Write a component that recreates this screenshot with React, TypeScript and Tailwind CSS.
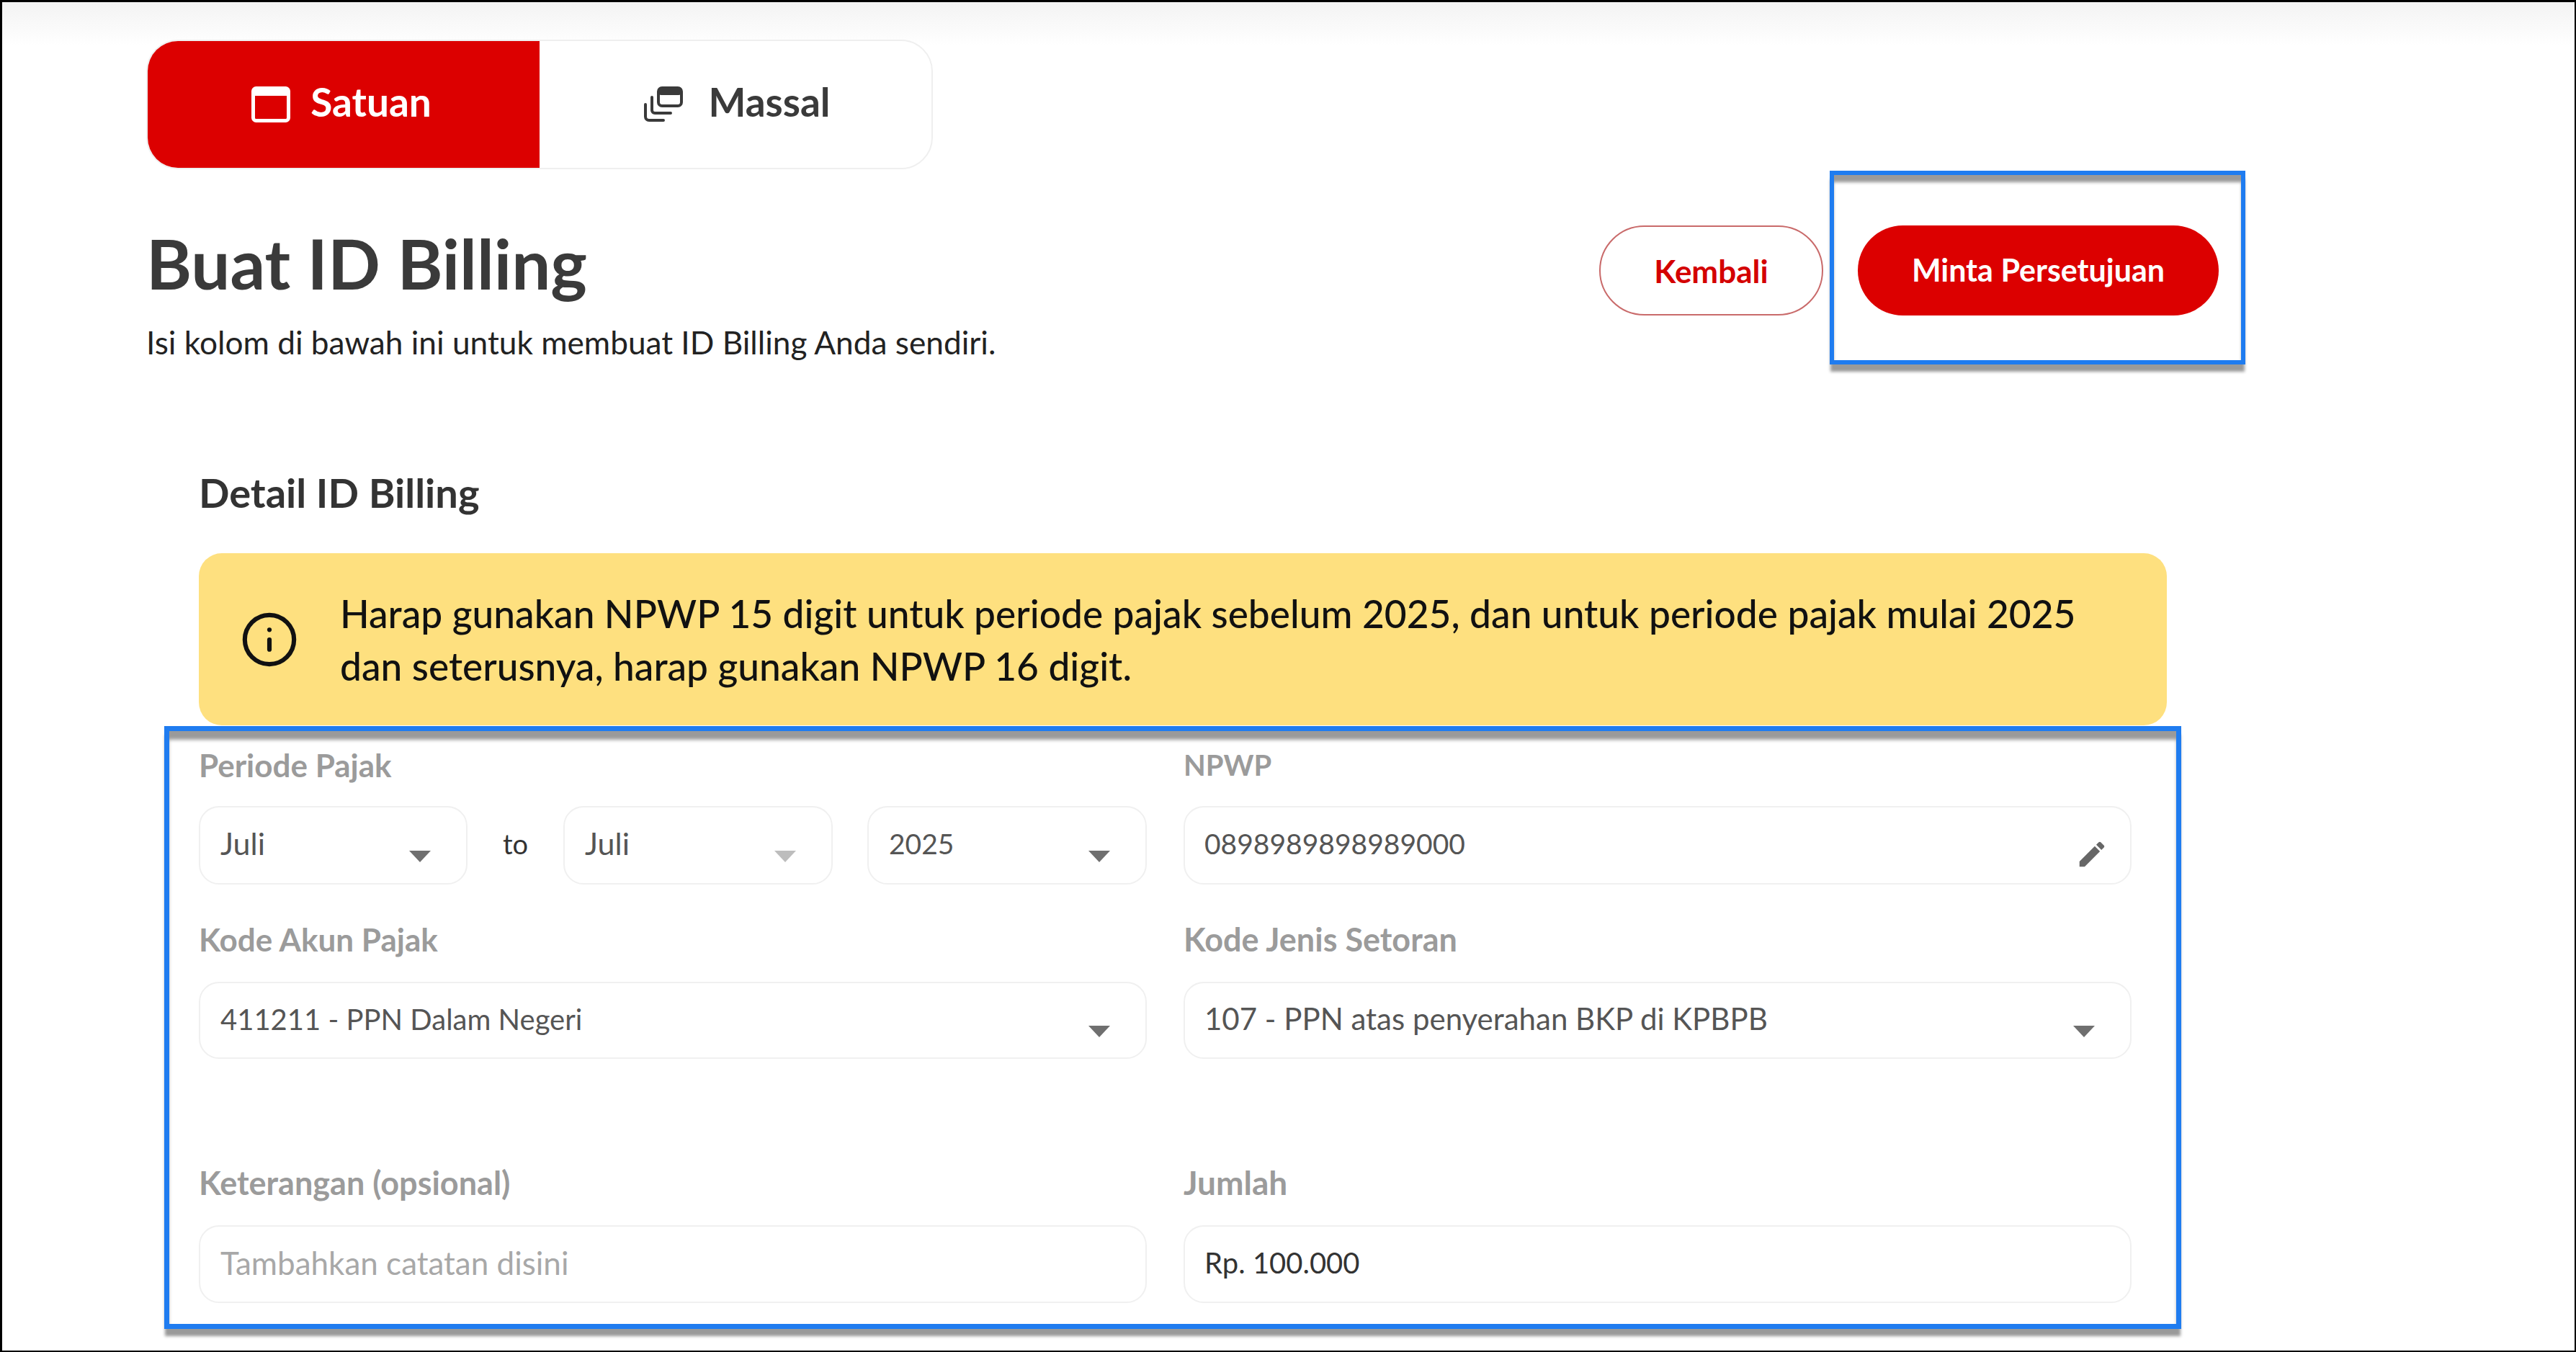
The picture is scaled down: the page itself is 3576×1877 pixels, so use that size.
import { Info } from "lucide-react";

function SingleIcon() {
  return (
    <svg width="54" height="50" viewBox="0 0 54 50" fill="none">
      <rect x="2.5" y="2.5" width="49" height="45" rx="4" stroke="#fff" strokeWidth="5" />
      <rect x="2" y="2" width="50" height="11" rx="3" fill="#fff" />
    </svg>
  );
}

function BulkIcon() {
  return (
    <svg width="54" height="50" viewBox="0 0 54 50" fill="none">
      <rect x="20" y="2" width="32" height="25" rx="5" stroke="#3a3a3a" strokeWidth="4" />
      <rect x="20" y="1" width="32" height="11" rx="4" fill="#3a3a3a" />
      <path d="M11 15v18a4 4 0 0 0 4 4h22" stroke="#3a3a3a" strokeWidth="4" strokeLinecap="round" />
      <path d="M2 25v17a5 5 0 0 0 5 5h20" stroke="#3a3a3a" strokeWidth="4" strokeLinecap="round" />
    </svg>
  );
}

function Arrow({ light }: { light?: boolean }) {
  return (
    <svg width="30" height="16" viewBox="0 0 30 16" className="mt-[30px] shrink-0">
      <path d="M0 0h30L15 16z" fill={light ? "#bdbdbd" : "#6f6f6f"} />
    </svg>
  );
}

function SelectBox({ value, light, className, size }: { value: string; light?: boolean; className: string; size: string }) {
  return (
    <div className={`flex h-full items-center justify-between rounded-[28px] border-2 border-[#f0f0f0] bg-white pl-[28px] pr-[49px] ${className}`}>
      <span className={`-mt-[4px] text-[#555555] ${size}`}>{value}</span>
      <Arrow light={light} />
    </div>
  );
}

function Label({ children, size = "text-[44px]" }: { children: string; size?: string }) {
  return <div className={`h-[50px] leading-[46px] font-bold text-[#9b9b9b] ${size}`}>{children}</div>;
}

function App() {
  return (
    <div className="box-border h-[1877px] overflow-hidden border-[3px] border-b-2 border-r-2 border-black bg-[linear-gradient(#f3f3f3,#ffffff_60px)] pl-[200px] pt-[52px] font-['Lato',sans-serif]">
      <div className="flex h-[180px] w-[1092px] overflow-hidden rounded-[44px] border-2 border-[#efefef] bg-white">
        <div className="-my-[2px] -ml-[2px] flex w-[546px] items-center justify-center gap-[28px] bg-[#dc0000] pr-[4px]">
          <SingleIcon />
          <span className="-mt-[8px] text-[55px] font-bold text-white">Satuan</span>
        </div>
        <div className="flex flex-1 items-center justify-center gap-[35px] pl-[5px]">
          <BulkIcon />
          <span className="-mt-[8px] text-[55px] font-bold text-[#3a3a3a]">Massal</span>
        </div>
      </div>

      <div className="mt-[2px] flex w-[2914px] items-start justify-between">
        <div className="mt-[73px]">
          <h1 className="text-[96px] leading-[110px] font-bold text-[#3a3a3a]">Buat ID Billing</h1>
          <p className="mt-[30px] text-[44.2px] leading-[50px] text-[#222222]">Isi kolom di bawah ini untuk membuat ID Billing Anda sendiri.</p>
        </div>
        <div className="flex items-start gap-[9px]">
          <button className="mt-[76px] h-[125px] w-[311px] rounded-full border-2 border-[#c96a6a] bg-white text-[44px] font-bold text-[#d40000]">Kembali</button>
          <div className="border-[6px] border-[#1f7cf0] pl-[33px] pr-[31px] pt-[70px] pb-[62px] shadow-[0_11px_4px_-1px_#9a9a9a,inset_0_11px_4px_-1px_#9a9a9a]">
            <button className="block h-[125px] w-[501px] rounded-full bg-[#dc0000] text-[43px] font-bold text-white">Minta Persetujuan</button>
          </div>
        </div>
      </div>

      <div className="ml-[73px] mt-[148px] text-[56px] leading-[60px] font-bold text-[#333333]">Detail ID Billing</div>

      <div className="ml-[73px] mt-[54px] flex h-[239px] w-[2732px] items-center rounded-[32px] bg-[#fee07f] pl-[57px]">
        <Info size={82} strokeWidth={1.8} color="#111111" className="shrink-0" />
        <p className="ml-[57px] text-[53.25px] leading-[73px] font-medium text-[#111111]">
          Harap gunakan NPWP 15 digit untuk periode pajak sebelum 2025, dan untuk periode pajak mulai 2025
          <br />
          dan seterusnya, harap gunakan NPWP 16 digit.
        </p>
      </div>

      <div className="ml-[25px] mt-[1px] box-border w-[2800px] border-[7px] border-[#1f7cf0] pl-[41px] pr-[62px] pt-[24px] pb-[29px] shadow-[0_11px_4px_-1px_#9a9a9a,inset_0_13px_5px_-1px_#9a9a9a]">
        <div className="grid grid-cols-[1316px_1316px] gap-x-[51px]">
          <div>
            <Label>Periode Pajak</Label>
            <div className="mt-[30px] flex h-[109px] items-center">
              <SelectBox value="Juli" size="text-[43px]" className="w-[373px]" />
              <span className="-mt-[4px] w-[133px] text-center text-[38px] text-[#333333]">to</span>
              <SelectBox value="Juli" size="text-[43px]" light className="w-[374px]" />
              <div className="w-[48px]" />
              <SelectBox value="2025" size="text-[39px]" className="w-[388px]" />
            </div>
          </div>
          <div>
            <Label size="text-[40px]">NPWP</Label>
            <div className="mt-[30px] flex h-[109px] items-center justify-between rounded-[28px] border-2 border-[#f0f0f0] pl-[27px] pr-[30px]">
              <span className="-mt-[4px] text-[39px] text-[#555555]">0898989898989000</span>
              <svg width="46" height="46" viewBox="0 0 24 24" className="mt-[24px]" fill="#666666">
                <path d="M3 17.25V21h3.75L17.81 9.94l-3.75-3.75L3 17.25zM20.71 7.04c.39-.39.39-1.02 0-1.41l-2.34-2.34c-.39-.39-1.02-.39-1.41 0l-1.83 1.83 3.75 3.75 1.83-1.83z" />
              </svg>
            </div>
          </div>

          <div className="mt-[53px]">
            <Label>Kode Akun Pajak</Label>
            <div className="mt-[32px] h-[107px]">
              <SelectBox value="411211 - PPN Dalam Negeri" size="text-[40px]" className="w-full" />
            </div>
          </div>
          <div className="mt-[53px]">
            <Label size="text-[45px]">Kode Jenis Setoran</Label>
            <div className="mt-[32px] h-[107px]">
              <SelectBox value="107 - PPN atas penyerahan BKP di KPBPB" size="text-[42px]" className="w-full !pl-[27px]" />
            </div>
          </div>

          <div className="mt-[149px]">
            <Label size="text-[45px]">Keterangan (opsional)</Label>
            <div className="mt-[32px] flex h-[108px] items-center rounded-[28px] border-2 border-[#f0f0f0] pl-[28px]">
              <span className="-mt-[4px] text-[44px] text-[#a8a8a8]">Tambahkan catatan disini</span>
            </div>
          </div>
          <div className="mt-[149px]">
            <Label size="text-[46px]">Jumlah</Label>
            <div className="mt-[32px] flex h-[108px] items-center rounded-[28px] border-2 border-[#f0f0f0] pl-[27px]">
              <span className="-mt-[4px] text-[40px] text-[#333333]">Rp. 100.000</span>
            </div>
          </div>
        </div>
      </div>
    </div>
  );
}

export default App;
